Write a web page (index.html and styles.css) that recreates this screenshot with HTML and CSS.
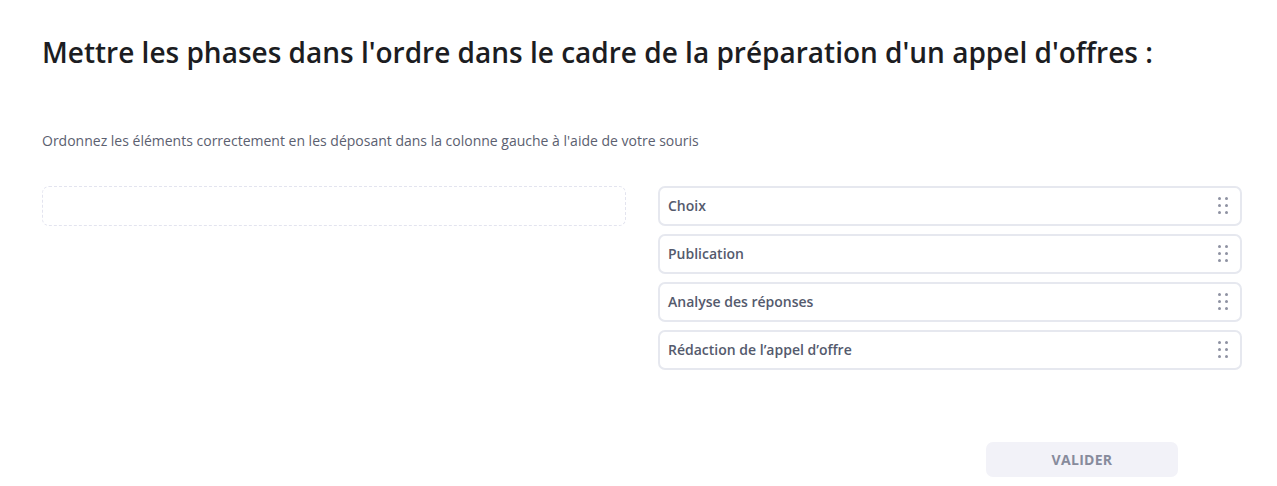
FILE: index.html
```html
<!DOCTYPE html>
<html lang="fr">
<head>
<meta charset="utf-8">
<link rel="stylesheet" href="styles.css">
</head>
<body>
<main class="page">
  <h1 class="title">Mettre les phases dans l'ordre dans le cadre de la préparation d'un appel d'offres :</h1>
  <p class="hint">Ordonnez les éléments correctement en les déposant dans la colonne gauche à l'aide de votre souris</p>
  <div class="board">
    <div class="col">
      <div class="dropzone"></div>
    </div>
    <div class="col list">
      <div class="item"><span>Choix</span><span class="grip"><i></i><i></i><i></i><i></i><i></i><i></i></span></div>
      <div class="item"><span>Publication</span><span class="grip"><i></i><i></i><i></i><i></i><i></i><i></i></span></div>
      <div class="item"><span>Analyse des réponses</span><span class="grip"><i></i><i></i><i></i><i></i><i></i><i></i></span></div>
      <div class="item"><span>Rédaction de l’appel d’offre</span><span class="grip"><i></i><i></i><i></i><i></i><i></i><i></i></span></div>
    </div>
  </div>
  <div class="actions">
    <button class="btn">VALIDER</button>
  </div>
</main>
</body>
</html>
```
FILE: styles.css
```css
* { box-sizing: border-box; }
html, body { margin: 0; padding: 0; background: #fff; }
body { font-family: "Open Sans", "Noto Sans", sans-serif; color: #1d1e24; }
.page { padding: 30px 35px 0 42px; }
.title {
  margin: 0;
  font-size: 28px;
  font-weight: 600;
  line-height: 44px;
  color: #1c1d22;
  letter-spacing: 0;
}
.hint {
  margin: 56px 0 0;
  font-size: 14px;
  line-height: 22px;
  color: #5b6070;
}
.board {
  display: grid;
  grid-template-columns: 584px 584px;
  column-gap: 32px;
  margin-top: 34px;
}
.dropzone {
  height: 40px;
  border: 1px dashed #e3e4ef;
  border-radius: 7px;
}
.list { display: flex; flex-direction: column; gap: 8px; }
.item {
  height: 40px;
  border: 2px solid #e6e8ef;
  border-radius: 7px;
  display: flex;
  align-items: center;
  justify-content: space-between;
  padding: 0 12px 2px 8px;
  font-size: 14px;
  font-weight: 600;
  color: #545a6d;
}
.grip {
  display: grid;
  grid-template-columns: 3px 3px;
  column-gap: 4px;
  row-gap: 4px;
}
.grip i {
  display: block;
  width: 3px;
  height: 3px;
  border-radius: 50%;
  background: #8e92a2;
}
.actions {
  display: flex;
  margin-top: 72px;
  padding-left: 944px;
}
.btn {
  width: 192px;
  height: 35px;
  border: 0;
  border-radius: 7px;
  background: #f2f2f8;
  font-family: "Open Sans", sans-serif;
  font-size: 14px;
  font-weight: 700;
  color: #878b9c;
  letter-spacing: 0.3px;
}
```
